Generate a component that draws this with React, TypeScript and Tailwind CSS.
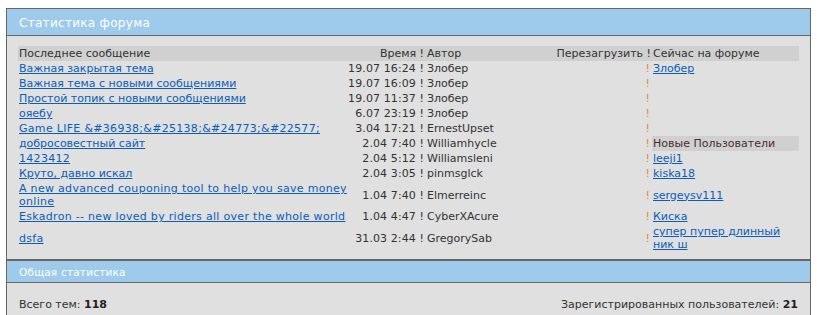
const rows: {
    title: string;
    time: string;
    author: string;
    right?: { text: string; kind: "link" | "head" };
}[] = [
    { title: "Важная закрытая тема", time: "19.07 16:24", author: "Злобер", right: { text: "Злобер", kind: "link" } },
    { title: "Важная тема с новыми сообщениями", time: "19.07 16:09", author: "Злобер" },
    { title: "Простой топик с новыми сообщениями", time: "19.07 11:37", author: "Злобер" },
    { title: "ояебу", time: "6.07 23:19", author: "Злобер" },
    { title: "Game LIFE &#36938;&#25138;&#24773;&#22577;", time: "3.04 17:21", author: "ErnestUpset" },
    { title: "добросовестный сайт", time: "2.04 7:40", author: "Williamhycle", right: { text: "Новые Пользователи", kind: "head" } },
    { title: "1423412", time: "2.04 5:12", author: "Williamsleni", right: { text: "leeji1", kind: "link" } },
    { title: "Круто, давно искал", time: "2.04 3:05", author: "pinmsglck", right: { text: "kiska18", kind: "link" } },
    { title: "A new advanced couponing tool to help you save money online", time: "1.04 7:40", author: "Elmerreinc", right: { text: "sergeysv111", kind: "link" } },
    { title: "Eskadron -- new loved by riders all over the whole world", time: "1.04 4:47", author: "CyberXAcure", right: { text: "Киска", kind: "link" } },
    { title: "dsfa", time: "31.03 2:44", author: "GregorySab", right: { text: "супер пупер длинный ник ш", kind: "link" } },
];

// латиница в оригинале шире, чем в DejaVu
const isLatin = (s: string) => /^[\x00-\x7F]+$/.test(s);

export default function App() {
    return (
        <div className="min-h-[315px] bg-white pt-2 pl-[6px] pr-[6px] font-['DejaVu_Sans',Verdana,sans-serif] text-[11px] leading-[13px] text-[#333]">
            <div className="w-[805px] border border-[#666] bg-[#dfe0df]">
                <div className="flex h-[26px] items-center bg-[#9ecaec] pl-[12px] pt-[3px] text-[12px] tracking-[0.3px] text-white">
                    Статистика форума
                </div>

                <div className="border-t border-[#666] px-[11px] pt-[10px] pb-[7px]">
                    <table className="w-[781px] table-fixed border-collapse">
                        <colgroup>
                            <col className="w-[329px]" />
                            <col className="w-[79px]" />
                            <col className="w-[226px]" />
                            <col className="w-[147px]" />
                        </colgroup>
                        <thead>
                            <tr className="h-[15px] bg-[#d0d0d0] text-left">
                                <th className="py-px pl-px font-normal">Последнее сообщение</th>
                                <th className="py-px pr-[2px] text-right font-normal whitespace-nowrap">Время !</th>
                                <th className="py-px pl-px font-normal">
                                    <div className="flex justify-between">
                                        <span>Автор</span>
                                        <span className="pr-px">Перезагрузить !</span>
                                    </div>
                                </th>
                                <th className="py-px pl-px font-normal">Сейчас на форуме</th>
                            </tr>
                        </thead>
                        <tbody>
                            {rows.map((r) => (
                                <tr key={r.title}>
                                    <td className="py-px pl-px align-middle">
                                        <a
                                            href="#"
                                            className={
                                                isLatin(r.title)
                                                    ? "text-[#0d5db8] underline tracking-[0.3px]"
                                                    : "text-[#0d5db8] underline"
                                            }
                                        >
                                            {r.title}
                                        </a>
                                    </td>
                                    <td className="py-px pr-[2px] text-right align-middle whitespace-nowrap tracking-[0.1px]">
                                        {r.time} !
                                    </td>
                                    <td className="py-px pl-px align-middle">
                                        <div className="flex justify-between">
                                            <span>{r.author}</span>
                                            <span className="pr-[2px] text-[#e8892a]">!</span>
                                        </div>
                                    </td>
                                    {r.right?.kind === "head" ? (
                                        <td className="bg-[#d0d0d0] py-px pl-px align-middle text-[#4a2c2c]">
                                            {r.right.text}
                                        </td>
                                    ) : (
                                        <td className="py-px pl-px pr-[14px] align-middle">
                                            {r.right && (
                                                <a href="#" className="text-[#0d5db8] underline">
                                                    {r.right.text}
                                                </a>
                                            )}
                                        </td>
                                    )}
                                </tr>
                            ))}
                        </tbody>
                    </table>
                </div>

                <div className="flex h-[23px] items-center border-t-2 border-[#666] bg-[#9ecaec] pl-[12px] pt-px text-[10.5px] tracking-[0.2px] text-white">
                    Общая статистика
                </div>

                <div className="flex justify-between border-t border-[#666] px-[12px] pt-[15px] pb-[10px]">
                    <span>
                        Всего тем: <b className="text-[#222]">118</b>
                    </span>
                    <span>
                        Зарегистрированных пользователей: <b className="text-[#222]">21</b>
                    </span>
                </div>
            </div>
        </div>
    );
}
